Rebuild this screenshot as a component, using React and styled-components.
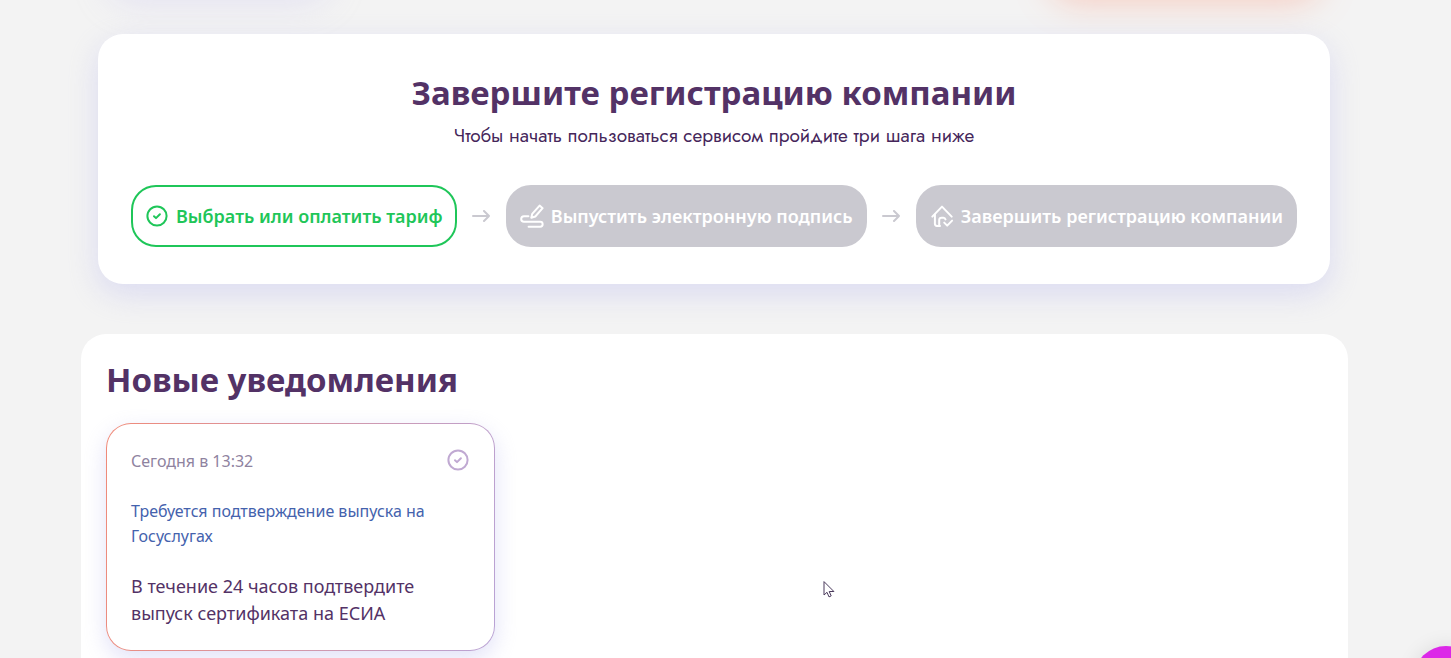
import React from 'react';
import styled, { createGlobalStyle } from 'styled-components';

const steps = [
  { title: 'Выбрать или оплатить тариф', icon: 'check', done: true },
  { title: 'Выпустить электронную подпись', icon: 'sign' },
  { title: 'Завершить регистрацию компании', icon: 'house' },
];

const CheckIcon = () => (
  <svg width='24' height='24' viewBox='0 0 24 24' aria-hidden='true'>
    <circle cx='12' cy='12' r='9.6' />
    <path d='M9 12.2l2 1.9 3.9-3.9' />
  </svg>
);

const SignIcon = () => (
  <svg width='24' height='24' viewBox='0 0 24 24' aria-hidden='true'>
    <path d='M12.2 9.9L19.6 1.6l3 2.6-7.3 8.3-4 1.2z' />
    <path d='M8.4 12.2H4a2.8 2.8 0 0 0 0 5.6h16.2a2.4 2.4 0 0 1 0 4.9H8.6' />
  </svg>
);

const HouseIcon = () => (
  <svg width='24' height='24' viewBox='0 0 24 24' aria-hidden='true'>
    <path d='M4.9 10.6v9.2a2.1 2.1 0 0 0 2.1 2.1h3' />
    <path d='M2.3 12.6L12 2.6l9.7 10' />
    <path d='M9.2 21.5v-5.4a2.4 2.4 0 0 1 2.4-2.4h1.8a2.2 2.2 0 0 1 2.1 1.7' />
    <path d='M14.2 18.6l3 3 4.9-5' />
  </svg>
);

const ArrowIcon = () => (
  <svg width='18' height='12' viewBox='0 0 18 12' aria-hidden='true'>
    <path d='M1 6h16M12 1l5 5-5 5' />
  </svg>
);

const icons = { check: CheckIcon, sign: SignIcon, house: HouseIcon };

const App = () => {
  return (
    <Page>
      <GlobalStyle />
      <TopRow>
        <TopCard $width='220px' $shadow='rgba(199, 192, 240, 0.35)' />
        <TopCard $width='270px' $shadow='rgba(255, 130, 95, 0.35)' />
      </TopRow>
      <Registration>
        <Title>Завершите регистрацию компании</Title>
        <Subtitle>Чтобы начать пользоваться сервисом пройдите три шага ниже</Subtitle>
        <Steps>
          {steps.map(({ title, icon, done }, index) => {
            const Icon = icons[icon];
            return (
              <React.Fragment key={title}>
                {index > 0 && (
                  <Arrow>
                    <ArrowIcon />
                  </Arrow>
                )}
                <Step type='button' $done={done}>
                  <Icon />
                  <span>{title}</span>
                </Step>
              </React.Fragment>
            );
          })}
        </Steps>
      </Registration>
      <Notifications>
        <Title>Новые уведомления</Title>
        <Notice>
          <NoticeHead>
            <time>Сегодня в 13:32</time>
            <ReadButton type='button' aria-label='Отметить прочитанным'>
              <CheckIcon />
            </ReadButton>
          </NoticeHead>
          <NoticeLink href='#gosuslugi'>
            Требуется подтверждение выпуска на Госуслугах
          </NoticeLink>
          <NoticeText>
            В течение 24 часов подтвердите выпуск сертификата на ЕСИА
          </NoticeText>
        </Notice>
      </Notifications>
      <ChatButton type='button' aria-label='Чат' />
      <Cursor width='12' height='18' viewBox='0 0 12 18' aria-hidden='true'>
        <path d='M1 1v13l3-2.7 2 4.6 2.2-1-2-4.4H10.5z' />
      </Cursor>
    </Page>
  );
};

const GlobalStyle = createGlobalStyle`
  * {
    box-sizing: border-box;
    margin: 0;
    padding: 0;
  }
  body {
    background: #f3f3f3;
    color: #533266;
    font-family: 'Segoe UI', 'Noto Sans', sans-serif;
    overflow-x: hidden;
  }
  svg {
    display: block;
    flex-shrink: 0;
    fill: none;
    stroke: currentColor;
    stroke-width: 2;
    stroke-linecap: round;
    stroke-linejoin: round;
  }
`;

const Page = styled.main`
  display: flex;
  flex-direction: column;
  padding: 0 103px 0 81px;
  overflow: hidden;
`;

const TopRow = styled.div`
  display: flex;
  justify-content: space-between;
  margin: -68px 18px 42px;
  padding: 0 10px;
`;

const TopCard = styled.div`
  width: ${({ $width }) => $width};
  height: 60px;
  border-radius: 25px;
  box-shadow: 0 10px 35px ${({ $shadow }) => $shadow};
`;

const Registration = styled.section`
  display: flex;
  flex-direction: column;
  align-items: center;
  margin: 0 18px 50px 17px;
  padding: 34px 33px 37px;
  border-radius: 25px;
  background: #fff;
  box-shadow: 0 10px 30px rgba(190, 190, 240, 0.45);
`;

const Title = styled.h1`
  font-size: 33px;
  line-height: 50px;
  font-weight: 700;
`;

const Subtitle = styled.p`
  margin-bottom: 31px;
  color: #45265a;
  font-family: Jost, Lato, sans-serif;
  font-size: 19px;
  line-height: 36px;
`;

const Steps = styled.div`
  display: flex;
  align-items: center;
  width: 100%;
`;

const Arrow = styled.span`
  display: flex;
  flex: 1;
  justify-content: center;
  color: #cac9d0;
`;

const Step = styled.button`
  display: flex;
  align-items: center;
  gap: 7px;
  height: 62px;
  padding: 0 12px;
  border: 2px solid ${({ $done }) => ($done ? '#1fc659' : '#cac9d0')};
  border-radius: 25px;
  background: ${({ $done }) => ($done ? '#fff' : '#cac9d0')};
  color: ${({ $done }) => ($done ? '#1fc659' : '#fff')};
  font-family: inherit;
  font-size: 18px;
  font-weight: 600;
  white-space: nowrap;
`;

const Notifications = styled.section`
  padding: 21px 25px 40px;
  border-radius: 25px;
  background: #fff;
`;

const Notice = styled.article`
  display: flex;
  flex-direction: column;
  gap: 24px;
  max-width: 389px;
  margin-top: 18px;
  padding: 24px 24px 23px;
  border: 1px solid transparent;
  border-radius: 25px;
  background: linear-gradient(#fff, #fff) padding-box,
    linear-gradient(100deg, #f08a78, #b9a3d6) border-box;
  box-shadow: 0 8px 22px rgba(190, 190, 240, 0.45);
`;

const NoticeHead = styled.div`
  display: flex;
  align-items: flex-start;
  justify-content: space-between;
  color: #8f839f;
  font-size: 16px;
  line-height: 27px;
`;

const ReadButton = styled.button`
  border: 0;
  background: none;
  color: #c0a9d2;
`;

const NoticeLink = styled.a`
  color: #4462ad;
  font-size: 16px;
  line-height: 25px;
  text-decoration: none;
`;

const NoticeText = styled.p`
  font-size: 18px;
  line-height: 27px;
`;

const ChatButton = styled.button`
  position: fixed;
  right: -27px;
  bottom: -52px;
  width: 64px;
  height: 64px;
  border: 0;
  border-radius: 50%;
  background: #dc28e8;
  box-shadow: 0 0 20px rgba(0, 0, 0, 0.1);
`;

const Cursor = styled.svg`
  position: fixed;
  top: 581px;
  left: 823px;
  fill: #fff;
  stroke: #4a3a5c;
  stroke-width: 1;
`;

export default App;
